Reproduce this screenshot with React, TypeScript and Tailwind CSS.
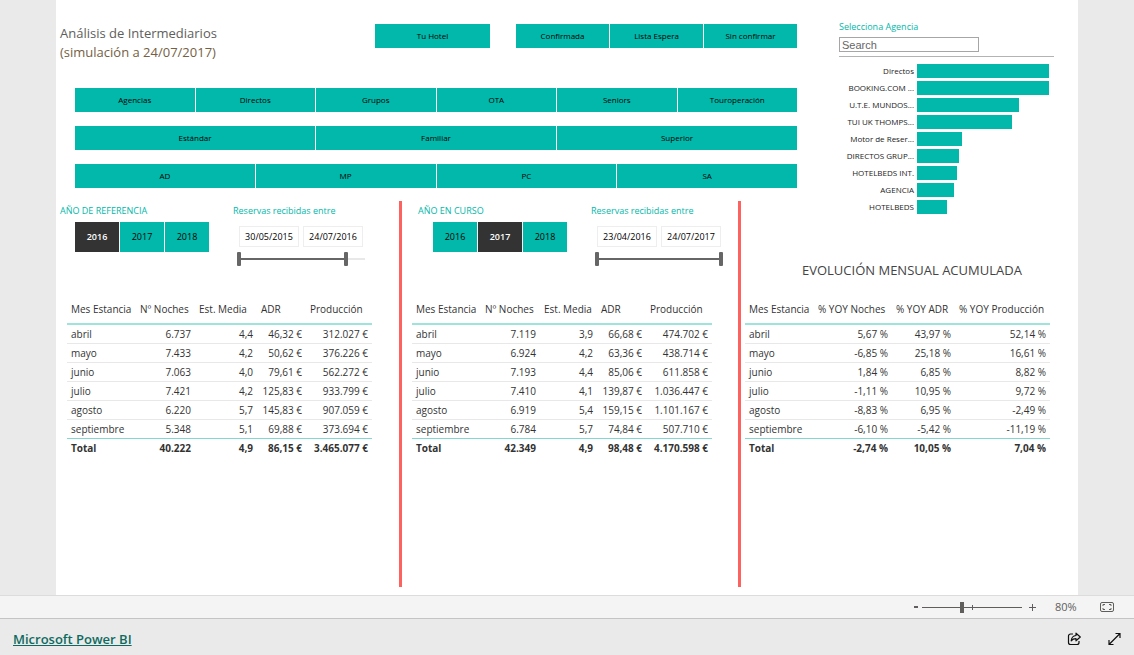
import { useState } from 'react'

const agencies = [
  { name: 'Directos', value: 132 },
  { name: 'BOOKING.COM ...', value: 132 },
  { name: 'U.T.E. MUNDOS...', value: 102 },
  { name: 'TUI UK THOMPS...', value: 95 },
  { name: 'Motor de Reser...', value: 45 },
  { name: 'DIRECTOS GRUP...', value: 42 },
  { name: 'HOTELBEDS INT.', value: 40 },
  { name: 'AGENCIA', value: 37 },
  { name: 'HOTELBEDS', value: 30 },
]

const maxAgency = 132

const filterRows = [
  ['Agencias', 'Directos', 'Grupos', 'OTA', 'Seniors', 'Touroperación'],
  ['Estándar', 'Familiar', 'Superior'],
  ['AD', 'MP', 'PC', 'SA'],
]

const years = ['2016', '2017', '2018']

const periodHeaders = ['Mes Estancia', 'Nº Noches', 'Est. Media', 'ADR', 'Producción']

const referenceRows = [
  ['abril', '6.737', '4,4', '46,32 €', '312.027 €'],
  ['mayo', '7.433', '4,2', '50,62 €', '376.226 €'],
  ['junio', '7.063', '4,0', '79,61 €', '562.272 €'],
  ['julio', '7.421', '4,2', '125,83 €', '933.799 €'],
  ['agosto', '6.220', '5,7', '145,83 €', '907.059 €'],
  ['septiembre', '5.348', '5,1', '69,88 €', '373.694 €'],
  ['Total', '40.222', '4,9', '86,15 €', '3.465.077 €'],
]

const currentRows = [
  ['abril', '7.119', '3,9', '66,68 €', '474.702 €'],
  ['mayo', '6.924', '4,2', '63,36 €', '438.714 €'],
  ['junio', '7.193', '4,4', '85,06 €', '611.858 €'],
  ['julio', '7.410', '4,1', '139,87 €', '1.036.447 €'],
  ['agosto', '6.919', '5,4', '159,15 €', '1.101.167 €'],
  ['septiembre', '6.784', '5,7', '74,84 €', '507.710 €'],
  ['Total', '42.349', '4,9', '98,48 €', '4.170.598 €'],
]

const evolutionHeaders = ['Mes Estancia', '% YOY Noches', '% YOY ADR', '% YOY Producción']

const evolutionRows = [
  ['abril', '5,67 %', '43,97 %', '52,14 %'],
  ['mayo', '-6,85 %', '25,18 %', '16,61 %'],
  ['junio', '1,84 %', '6,85 %', '8,82 %'],
  ['julio', '-1,11 %', '10,95 %', '9,72 %'],
  ['agosto', '-8,83 %', '6,95 %', '-2,49 %'],
  ['septiembre', '-6,10 %', '-5,42 %', '-11,19 %'],
  ['Total', '-2,74 %', '10,05 %', '7,04 %'],
]

function ButtonGroup({ items }: { items: string[] }) {
  return (
    <div className="flex gap-px">
      {items.map((item) => (
        <button key={item} className="h-6 flex-1 basis-0 bg-[#01b8aa] text-[8px] leading-3 text-black">
          {item}
        </button>
      ))}
    </div>
  )
}

function AgencySlicer() {
  return (
    <div>
      <label htmlFor="agency" className="block text-[9px] leading-4 text-[#01b8aa]">
        Selecciona Agencia
      </label>
      <input
        id="agency"
        type="text"
        placeholder="Search"
        className="mt-0.5 block h-[15px] w-[140px] border border-[#a6a6a6] px-0.5 font-['Liberation_Sans',sans-serif] text-[11px] leading-3 placeholder:text-[#666]"
      />
      <div className="mt-1 border-t border-[#b3b3b3]" />
      <ul className="mt-[7px] space-y-[3px] pr-[5px]">
        {agencies.map((a) => (
          <li key={a.name} className="flex h-3.5 items-center gap-[3px]">
            <span className="w-[75px] shrink-0 text-right text-[8px] leading-3 whitespace-nowrap text-[#222]">
              {a.name}
            </span>
            <div className="h-full flex-1">
              <div className="h-full bg-[#01b8aa]" style={{ width: `${(a.value / maxAgency) * 100}%` }} />
            </div>
          </li>
        ))}
      </ul>
    </div>
  )
}

function DateRange({ id, from, to, end }: { id: string; from: string; to: string; end: number }) {
  const [low, setLow] = useState(0)
  const [high, setHigh] = useState(end)
  const thumb =
    'pointer-events-none absolute inset-0 h-full w-full appearance-none bg-transparent [&::-webkit-slider-thumb]:pointer-events-auto [&::-webkit-slider-thumb]:h-3.5 [&::-webkit-slider-thumb]:w-1 [&::-webkit-slider-thumb]:appearance-none [&::-webkit-slider-thumb]:rounded-[1px] [&::-webkit-slider-thumb]:bg-[#666]'

  return (
    <fieldset className="w-[132px]">
      <legend className="text-[9px] leading-4 text-[#01b8aa]">Reservas recibidas entre</legend>
      <div className="mt-[7px] flex gap-1 pl-1.5">
        {[from, to].map((date, i) => (
          <input
            key={date}
            type="text"
            aria-label={i === 0 ? 'Desde' : 'Hasta'}
            defaultValue={date}
            className="h-[21px] w-[60px] border border-[#eee] bg-white text-center text-[9px] text-black"
          />
        ))}
      </div>
      <div className="relative mt-[5px] ml-1 h-3.5">
        <div className="absolute inset-x-0 top-1.5 h-0.5 bg-[#e8e8e8]" />
        <div
          className="absolute top-1.5 h-0.5 bg-[#666]"
          style={{ left: `${low}%`, right: `${100 - high}%` }}
        />
        <input
          id={`${id}-low`}
          type="range"
          aria-label="Fecha inicial"
          value={low}
          onChange={(e) => setLow(Math.min(Number(e.target.value), high))}
          className={thumb}
        />
        <input
          id={`${id}-high`}
          type="range"
          aria-label="Fecha final"
          value={high}
          onChange={(e) => setHigh(Math.max(Number(e.target.value), low))}
          className={thumb}
        />
      </div>
    </fieldset>
  )
}

function YearPicker({ label, initial }: { label: string; initial: string }) {
  const [active, setActive] = useState(initial)

  return (
    <div>
      <h2 className="text-[9px] leading-4 whitespace-nowrap text-[#01b8aa]">{label}</h2>
      <div className="mt-[3px] ml-[15px] flex gap-px">
        {years.map((y) => (
          <button
            key={y}
            onClick={() => setActive(y)}
            className={`h-[30px] w-11 text-[9px] ${
              y === active ? 'bg-[#333] font-semibold text-white' : 'bg-[#01b8aa] text-black'
            }`}
          >
            {y}
          </button>
        ))}
      </div>
    </div>
  )
}

function DataTable({ headers, rows, columns }: { headers: string[]; rows: string[][]; columns: string[] }) {
  return (
    <table className="table-fixed border-collapse text-[10px] leading-4 whitespace-nowrap text-[#333]">
      <colgroup>
        {columns.map((c, i) => (
          <col key={i} className={c} />
        ))}
      </colgroup>
      <thead>
        <tr className="h-[29px] border-b-2 border-[#9fe3dd]">
          {headers.map((h) => (
            <th key={h} scope="col" className="px-1 text-left font-normal">
              {h}
            </th>
          ))}
        </tr>
      </thead>
      <tbody>
        {rows.map((row, i) => (
          <tr
            key={row[0]}
            className={`h-[19px] ${
              i === rows.length - 1
                ? 'font-bold'
                : i === rows.length - 2
                ? 'border-b border-[#80d8d0]'
                : 'border-b border-[#e8e8e8]'
            }`}
          >
            {row.map((cell, j) => (
              <td key={j} className={`px-1 ${j === 0 ? 'text-left' : 'text-right'}`}>
                {cell}
              </td>
            ))}
          </tr>
        ))}
      </tbody>
    </table>
  )
}

function ZoomBar() {
  const [zoom, setZoom] = useState(80)

  return (
    <div className="flex h-[23px] items-center justify-end border-t border-[#dcdcdc] bg-[#f4f4f4] pr-[19px] text-[#605e5c]">
      <button aria-label="Alejar" onClick={() => setZoom(Math.max(10, zoom - 10))} className="flex h-4 w-2 items-center">
        <span className="h-0.5 w-1 bg-[#605e5c]" />
      </button>
      <div className="relative h-3 w-[100px]">
        <div className="absolute top-1 left-[50px] h-[5px] w-px bg-[#605e5c]" />
        <input
          type="range"
          aria-label="Zoom"
          min={4}
          max={196}
          value={zoom}
          onChange={(e) => setZoom(Number(e.target.value))}
          className="absolute inset-0 h-full w-full appearance-none bg-transparent [&::-webkit-slider-runnable-track]:h-px [&::-webkit-slider-runnable-track]:bg-[#605e5c] [&::-webkit-slider-thumb]:-mt-[5px] [&::-webkit-slider-thumb]:h-[11px] [&::-webkit-slider-thumb]:w-1 [&::-webkit-slider-thumb]:appearance-none [&::-webkit-slider-thumb]:bg-[#605e5c]"
        />
      </div>
      <button aria-label="Acercar" onClick={() => setZoom(Math.min(196, zoom + 10))} className="ml-1.5">
        <svg width="9" height="9" viewBox="0 0 9 9" stroke="currentColor">
          <path d="M4.500 1v7M1 4.500h7" />
        </svg>
      </button>
      <span className="ml-[18px] w-6 text-[11px]">{zoom}%</span>
      <button aria-label="Ajustar a la página" className="ml-[21px]">
        <svg width="15" height="11" viewBox="0 0 15 11" fill="none" stroke="currentColor">
          <rect x=".5" y=".5" width="13" height="9" rx="1.5" />
          <path d="M3 4V2.500h2M9 2.500h2V4M11 6v1.500H9M5 7.500H3V6" />
        </svg>
      </button>
    </div>
  )
}

function Footer() {
  return (
    <footer className="flex h-[37px] items-center border-t border-[#c4c4c4] bg-[#eaeaea] pt-1 pr-3 pl-[13px]">
      <a href="#" className="mr-auto text-[13px] leading-5 font-semibold text-[#0e6a60] underline">
        Microsoft Power BI
      </a>
      <button aria-label="Compartir" className="mr-[25px]">
        <svg width="15" height="14" viewBox="0 0 15 14" fill="none" stroke="#111" strokeWidth="1.2" strokeLinejoin="round">
          <path d="M6 2H3.500a2 2 0 0 0-2 2v6.500a2 2 0 0 0 2 2H10a2 2 0 0 0 2-2V9" />
          <path d="M9 1.200 13.300 5 9 8.800V6.600C6.700 6.600 5.300 7.300 4.200 8.800 4.500 5.600 6.200 3.700 9 3.500Z" />
        </svg>
      </button>
      <button aria-label="Pantalla completa">
        <svg width="15" height="14" viewBox="0 0 15 14" fill="none" stroke="#111" strokeWidth="1.2">
          <path d="M2 12.500 13 1.500M8.500 1.500H13V6M2 8v4.500h4.500" />
        </svg>
      </button>
    </footer>
  )
}

export default function App() {
  return (
    <div className="flex min-h-screen flex-col bg-[#eaeaea] font-['Open_Sans','Noto_Sans',sans-serif]">
      <main className="mx-14 grid flex-1 grid-cols-[346fr_339fr_56fr_281fr] grid-rows-[auto_20px_1fr] bg-white pb-2">
        <section className="col-span-3 pt-6 pb-[13px] pl-1">
          <div className="flex items-start">
            <h1 className="flex-1 text-[13px] leading-[19px] text-[#605e5c]">
              Análisis de Intermediarios
              <br />
              <span className="text-[#756043]">(simulación a 24/07/2017)</span>
            </h1>
            <div className="mr-[26px] w-[115px]">
              <ButtonGroup items={['Tu Hotel']} />
            </div>
            <div className="w-[281px]">
              <ButtonGroup items={['Confirmada', 'Lista Espera', 'Sin confirmar']} />
            </div>
          </div>
          <div className="mt-[26px] ml-[15px] space-y-3.5">
            {filterRows.map((items) => (
              <ButtonGroup key={items[0]} items={items} />
            ))}
          </div>
        </section>

        <section className="row-span-2 pt-[19px] pr-6 pl-[42px]">
          <AgencySlicer />
        </section>

        <section className="row-span-2 border-r-[3px] border-[#fd625e] pt-0.5 pl-1">
          <div className="flex items-start">
            <div className="w-[173px]">
              <YearPicker label="AÑO DE REFERENCIA" initial="2016" />
            </div>
            <DateRange id="reference" from="30/05/2015" to="24/07/2016" end={86} />
          </div>
          <div className="mt-[29px] ml-[7px]">
            <DataTable
              headers={periodHeaders}
              rows={referenceRows}
              columns={['w-[69px]', 'w-[59px]', 'w-[62px]', 'w-[49px]', 'w-[66px]']}
            />
          </div>
        </section>

        <section className="row-span-2 border-r-[3px] border-[#fd625e] pt-0.5 pl-4">
          <div className="flex items-start">
            <div className="w-[173px]">
              <YearPicker label="AÑO EN CURSO" initial="2017" />
            </div>
            <DateRange id="current" from="23/04/2016" to="24/07/2017" end={100} />
          </div>
          <div className="mt-[29px] -ml-1.5">
            <DataTable
              headers={periodHeaders}
              rows={currentRows}
              columns={['w-[69px]', 'w-[59px]', 'w-[57px]', 'w-[49px]', 'w-[66px]']}
            />
          </div>
        </section>

        <section className="col-span-2 col-start-3 pt-[39px] pl-1">
          <h2 className="pl-[57px] text-[13px] leading-5 whitespace-nowrap text-[#444]">
            EVOLUCIÓN MENSUAL ACUMULADA
          </h2>
          <div className="mt-[15px]">
            <DataTable
              headers={evolutionHeaders}
              rows={evolutionRows}
              columns={['w-[69px]', 'w-[78px]', 'w-[63px]', 'w-[95px]']}
            />
          </div>
        </section>
      </main>
      <ZoomBar />
      <Footer />
    </div>
  )
}
